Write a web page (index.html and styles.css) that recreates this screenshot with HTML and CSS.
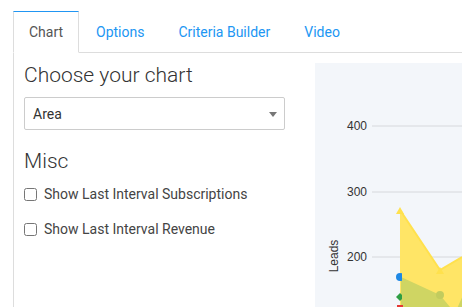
FILE: index.html
```html
<!DOCTYPE html>
<html lang="en">
<head>
    <meta charset="UTF-8">
    <meta name="viewport" content="width=device-width, initial-scale=1.0">
    <title>Chart settings</title>
    <link rel="stylesheet" href="styles.css">
</head>
<body>
    <div class="tabs">
        <ul class="tab-bar">
            <li class="tab active">Chart</li>
            <li class="tab">Options</li>
            <li class="tab">Criteria Builder</li>
            <li class="tab">Video</li>
            <li class="tab-fill"></li>
        </ul>
        <div class="tab-content">
            <div class="settings">
                <h2 class="section-title">Choose your chart</h2>
                <div class="select-box">Area</div>
                <h2 class="section-title misc">Misc</h2>
                <label class="check-row"><input type="checkbox"> Show Last Interval Subscriptions</label>
                <label class="check-row"><input type="checkbox"> Show Last Interval Revenue</label>
            </div>
            <div class="chart-panel">
                <svg class="chart" width="147" height="244" viewBox="0 0 147 244">
                    <g class="grid">
                        <line x1="57" y1="63" x2="147" y2="63"></line>
                        <line x1="57" y1="129" x2="147" y2="129"></line>
                        <line x1="57" y1="194" x2="147" y2="194"></line>
                    </g>
                    <g class="axis-labels">
                        <text x="52" y="67">400</text>
                        <text x="52" y="133">300</text>
                        <text x="52" y="198">200</text>
                    </g>
                    <text class="axis-title" transform="translate(23 193) rotate(-90)">Leads</text>

                    <polygon class="area-yellow" points="85,147 125,207 147,194 147,244 85,244"></polygon>
                    <polyline class="line-yellow" points="85,147 125,207 147,194"></polyline>
                    <polygon class="area-olive" points="86,214 125,232 140,250 155,217 155,260 86,260"></polygon>

                    <clipPath id="leftHalf"><rect x="0" y="0" width="87" height="244"></rect></clipPath>
                    <circle cx="85" cy="214" r="4" fill="#1e88e5" clip-path="url(#leftHalf)"></circle>
                    <path d="M85 230 L89 234 L85 238 L81 234 Z" fill="#2e9e44" clip-path="url(#leftHalf)"></path>
                    <rect x="82" y="242" width="6" height="2" fill="#e53935"></rect>

                    <path d="M85 144 L89 151 L81 151 Z" fill="#ffe14d"></path>
                    <path d="M125 204 L129 211 L121 211 Z" fill="#ffe14d"></path>
                    <circle cx="125" cy="232" r="4" fill="#c2cc5e"></circle>
                </svg>
            </div>
        </div>
    </div>
</body>
</html>
```
FILE: styles.css
```css
* {
    box-sizing: border-box;
}

html, body {
    margin: 0;
    height: 100%;
    overflow: hidden;
}

body {
    font-family: Roboto, "Liberation Sans", Arial, sans-serif;
    color: #333;
    background: #fff;
}

.tabs {
    padding: 11px 0 0 13px;
    height: 100%;
    display: flex;
    flex-direction: column;
}

.tab-bar {
    list-style: none;
    margin: 0;
    padding: 0;
    display: flex;
    height: 42px;
}

.tab {
    padding: 0 17px;
    line-height: 42px;
    font-size: 14px;
    color: #2196f3;
    border-bottom: 1px solid #ddd;
    white-space: nowrap;
}

.tab.active {
    color: #555;
    padding: 0 15px;
    width: 66px;
    line-height: 40px;
    border: 1px solid #ddd;
    border-top: 1px solid #2196f3;
    border-bottom: 1px solid transparent;
}

.tab-fill {
    flex: 1;
    border-bottom: 1px solid #ddd;
}

.tab-content {
    flex: 1;
    min-height: 0;
    display: flex;
    border-left: 1px solid #ddd;
    padding: 10px 0 0 10px;
    gap: 30px;
    overflow: hidden;
}

.settings {
    width: 261px;
    flex-shrink: 0;
}

.section-title {
    margin: 0;
    font-size: 21px;
    font-weight: 300;
    line-height: 24px;
    color: #333;
}

.select-box {
    position: relative;
    margin-top: 10px;
    height: 33px;
    border: 1px solid #ccc;
    border-radius: 2px;
    padding-left: 8px;
    line-height: 33px;
    font-size: 14px;
    color: #333;
}

.select-box::after {
    content: "";
    position: absolute;
    right: 7px;
    top: 14px;
    border-left: 4px solid transparent;
    border-right: 4px solid transparent;
    border-top: 5px solid #777;
}

.misc {
    margin-top: 19px;
    margin-bottom: 10px;
}

.check-row {
    display: flex;
    align-items: center;
    gap: 7px;
    height: 22px;
    margin-bottom: 13px;
    font-size: 14px;
    color: #444;
}

.check-row input {
    margin: 0;
    width: 13px;
    height: 13px;
}

.chart-panel {
    flex: 1;
    min-width: 0;
    background: #f3f6fa;
}

.chart {
    display: block;
}

.grid line {
    stroke: #d6d8dc;
    stroke-width: 1;
}

.axis-labels text {
    font-family: "Liberation Sans", Arial, sans-serif;
    font-size: 12px;
    fill: #333;
    text-anchor: end;
}

.axis-title {
    font-family: "Liberation Sans", Arial, sans-serif;
    font-size: 12px;
    fill: #333;
    text-anchor: middle;
}

.area-yellow {
    fill: #ffe566;
}

.line-yellow {
    fill: none;
    stroke: #ffe14d;
    stroke-width: 2;
}

.area-olive {
    fill: #cfd563;
}
```
